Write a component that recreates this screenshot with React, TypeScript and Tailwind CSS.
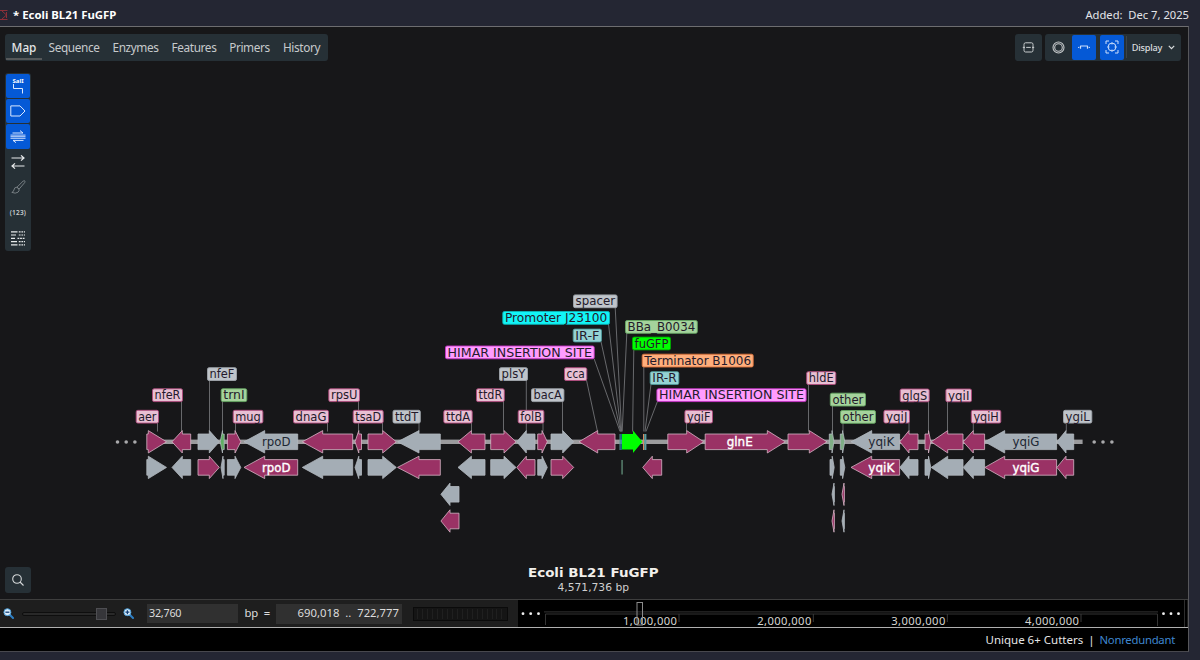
import React from 'react';
import clsx from 'clsx';

const MAROON = '#9a3265';
const GRAY = '#a4adb5';
const GREEN = '#7fae86';

type Gene = {
  tip: number;
  head: number;
  end: number;
  y: number;
  fill: string;
};

const ROWS = [441.8, 467.4, 494.3, 521];

// [tip, head, end, isMaroon] for the genes that appear on both frames
const PAIRED: [number, number, number, boolean][] = [
  [166.5, 148.3, 146.8, true],
  [172, 182.3, 190.7, true],
  [219.3, 209.3, 198, false],
  [240.8, 235, 227.4, true],
  [244, 264.7, 297.7, false],
  [302.3, 322.7, 352.7, true],
  [355, 358.8, 361.5, true],
  [396.3, 382.7, 368, true],
  [397.5, 419, 440.3, false],
  [458, 471.4, 485, true],
  [516, 504, 490.7, true],
  [516.8, 526.3, 535, false],
  [547.3, 542, 537.7, true],
  [573.7, 562.7, 551, false],
  [851, 871.7, 899.6, false],
  [899.8, 909, 918, true],
  [930.8, 928.5, 925, true],
  [931.2, 947.7, 963, true],
  [963.2, 973.3, 984.6, true],
  [984.8, 1004.7, 1056.6, false],
  [1056.9, 1066, 1073.7, false],
];

const genes: Gene[] = [
  ...PAIRED.flatMap(([tip, head, end, maroon]) => [
    { tip, head, end, y: ROWS[0], fill: maroon ? MAROON : GRAY },
    { tip, head, end, y: ROWS[1], fill: maroon ? GRAY : MAROON },
  ]),
  { tip: 220.2, head: 222.5, end: 224.2, y: ROWS[0], fill: '#5fae62' },
  { tip: 221, head: 223, end: 224.2, y: ROWS[1], fill: GRAY },
  { tip: 579, head: 597.7, end: 615, y: ROWS[0], fill: MAROON },
  { tip: 703.7, head: 686.7, end: 667.8, y: ROWS[0], fill: MAROON },
  { tip: 785.3, head: 767.3, end: 705.2, y: ROWS[0], fill: MAROON },
  { tip: 827, head: 809.3, end: 788, y: ROWS[0], fill: MAROON },
  { tip: 642.7, head: 652.3, end: 661.7, y: ROWS[1], fill: MAROON },
  { tip: 834, head: 832, end: 829.3, y: ROWS[0], fill: GREEN },
  { tip: 844.8, head: 842.6, end: 840.3, y: ROWS[0], fill: GREEN },
  { tip: 834.2, head: 832.2, end: 830, y: ROWS[1], fill: GRAY },
  { tip: 844.8, head: 842.6, end: 840.3, y: ROWS[1], fill: GRAY },
  { tip: 832, head: 834, end: 834.4, y: ROWS[2], fill: GRAY },
  { tip: 842, head: 844, end: 844.4, y: ROWS[2], fill: MAROON },
  { tip: 832, head: 834, end: 834.4, y: ROWS[3], fill: MAROON },
  { tip: 842, head: 844, end: 844.4, y: ROWS[3], fill: GRAY },
  { tip: 440.9, head: 450, end: 459, y: ROWS[2], fill: GRAY },
  { tip: 440.9, head: 450, end: 459, y: ROWS[3], fill: MAROON },
];

const geneNames = [
  { text: 'rpoD', x: 262, y: 446, w: 28.5, white: false },
  { text: 'rpoD', x: 262, y: 471.7, w: 28.5, white: true },
  { text: 'glnE', x: 726.7, y: 446, w: 26, white: true },
  { text: 'yqiK', x: 868.3, y: 446, w: 26, white: false },
  { text: 'yqiK', x: 868.3, y: 471.7, w: 26, white: true },
  { text: 'yqiG', x: 1012.5, y: 446, w: 27, white: false },
  { text: 'yqiG', x: 1012.5, y: 471.7, w: 27, white: true },
];

const TONES = {
  pink: ['#e8bfd3', '#b04a7d'],
  gray: ['#bfc4ca', '#9fa5ab'],
  green: ['#a5d39c', '#67a863'],
  lime: ['#00ff00', '#00a800'],
  cyan: ['#12f5f7', '#0bb5b8'],
  teal: ['#94d2d3', '#4f9a9c'],
  magenta: ['#ff9cff', '#c832c8'],
  orange: ['#ffae7c', '#d9703a'],
};

type Tag = {
  text: string;
  x: number;
  right: number;
  y: number;
  tone: keyof typeof TONES;
  line: [number, number];
};

// line: [x where the leader leaves the tag, x where it meets the map]
const tags: Tag[] = [
  { text: 'aer', x: 135.7, right: 159, y: 409.8, tone: 'pink', line: [157.5, 157.5] },
  { text: 'nfeR', x: 152, right: 183, y: 388.3, tone: 'pink', line: [181.5, 181.5] },
  { text: 'nfeF', x: 207, right: 237, y: 367.2, tone: 'gray', line: [209.5, 209.5] },
  { text: 'trnI', x: 220.7, right: 247.3, y: 388.3, tone: 'green', line: [222.5, 222.5] },
  { text: 'mug', x: 232.7, right: 263.4, y: 409.8, tone: 'pink', line: [235.5, 235.5] },
  { text: 'dnaG', x: 293, right: 329, y: 409.8, tone: 'pink', line: [327.5, 327.5] },
  { text: 'rpsU', x: 328.3, right: 360, y: 388.3, tone: 'pink', line: [358.5, 358.5] },
  { text: 'tsaD', x: 352.7, right: 383.7, y: 409.8, tone: 'pink', line: [382.5, 382.5] },
  { text: 'ttdT', x: 392.5, right: 420.8, y: 409.8, tone: 'gray', line: [419, 419] },
  { text: 'ttdA', x: 443.3, right: 472.7, y: 409.8, tone: 'pink', line: [471.5, 471.5] },
  { text: 'ttdR', x: 476, right: 504.8, y: 388.3, tone: 'pink', line: [503.5, 503.5] },
  { text: 'plsY', x: 499, right: 528, y: 367.2, tone: 'gray', line: [526.3, 526.3] },
  { text: 'bacA', x: 531, right: 564.4, y: 388.3, tone: 'gray', line: [562.5, 562.5] },
  { text: 'folB', x: 517.7, right: 544.4, y: 409.8, tone: 'pink', line: [543, 543] },
  { text: 'cca', x: 564, right: 587.3, y: 367.2, tone: 'pink', line: [586.5, 597.5] },
  { text: 'spacer', x: 573, right: 617.6, y: 294.4, tone: 'gray', line: [615.2, 621.6] },
  { text: 'Promoter J23100', x: 502.3, right: 610, y: 311, tone: 'cyan', line: [608.5, 621] },
  { text: 'IR-F', x: 572.7, right: 602, y: 328.6, tone: 'teal', line: [601, 620.6] },
  { text: 'HIMAR INSERTION SITE', x: 445, right: 594.7, y: 345.5, tone: 'magenta', line: [594, 620] },
  { text: 'BBa_B0034', x: 625, right: 697.8, y: 320, tone: 'green', line: [626.8, 622.2] },
  { text: 'fuGFP', x: 632, right: 671, y: 336.6, tone: 'lime', line: [633.8, 632.6] },
  { text: 'Terminator B1006', x: 641.7, right: 753.7, y: 353.7, tone: 'orange', line: [643.8, 643.8] },
  { text: 'IR-R', x: 649.7, right: 679.3, y: 371.2, tone: 'teal', line: [651, 645] },
  { text: 'HIMAR INSERTION SITE', x: 656.4, right: 806.6, y: 388.3, tone: 'magenta', line: [657.5, 646] },
  { text: 'ygiF', x: 684.4, right: 713, y: 409.8, tone: 'pink', line: [686.5, 686.5] },
  { text: 'hldE', x: 806.2, right: 836.3, y: 371.2, tone: 'pink', line: [808.5, 808.5] },
  { text: 'other', x: 829.8, right: 866, y: 392.7, tone: 'green', line: [832.5, 832.5] },
  { text: 'other', x: 840, right: 876, y: 410, tone: 'green', line: [843, 843] },
  { text: 'yqiJ', x: 883.4, right: 910, y: 409.8, tone: 'pink', line: [909, 909] },
  { text: 'glgS', x: 899.7, right: 929.7, y: 388.5, tone: 'pink', line: [928.5, 928.5] },
  { text: 'yqiI', x: 945.4, right: 972, y: 388.5, tone: 'pink', line: [947.5, 947.5] },
  { text: 'yqiH', x: 970.8, right: 1001.3, y: 409.8, tone: 'pink', line: [973.3, 973.3] },
  { text: 'ygiL', x: 1063, right: 1092.3, y: 409.8, tone: 'gray', line: [1066.3, 1066.3] },
];

const GeneArrow = ({ tip, head, end, y, fill }: Gene) => (
  <polygon
    points={`${tip},${y} ${head},${y - 11.2} ${head},${y - 7.8} ${end},${y - 7.8} ${end},${y + 7.8} ${head},${y + 7.8} ${head},${y + 11.2}`}
    fill={fill}
    stroke={fill === MAROON ? '#d5b5c5' : '#b3b9bf'}
    strokeWidth={0.8}
  />
);

const GenomeMap = () => (
  <svg width="1152" height="532" viewBox="36 67 1152 532" className="shrink-0" fontFamily='"DejaVu Sans", sans-serif'>
    {tags.map(({ y, line }, i) => (
      <line key={i} x1={line[0]} y1={y + 13} x2={line[1]} y2={431.5} stroke="#707275" strokeWidth={0.9} />
    ))}
    <rect x="147" y="439.6" width="935.6" height="4.4" fill="#9b9b9d" />
    {[117.5, 126.2, 134.9, 1094.2, 1103, 1111.9].map((cx) => (
      <circle key={cx} cx={cx} cy="442" r="1.8" fill="#a9a9ab" />
    ))}
    {genes.map((gene, i) => (
      <GeneArrow key={i} {...gene} />
    ))}

    <rect x="619.5" y="434" width="1" height="16" fill="#5d8f91" />
    <rect x="620.5" y="434" width="1.2" height="16" fill="#1687a8" />
    <polygon points="622,434 633,434 633,430.6 642.4,441.8 633,453 633,449.6 622,449.6" fill="#00ff00" />
    <rect x="643" y="434" width="1" height="16" fill="#d98a5c" />
    <rect x="644.2" y="434" width="2.2" height="16" fill="#5d9c9e" />
    <rect x="621.5" y="460" width="1.1" height="14.5" fill="#6fa58b" />

    {geneNames.map(({ text, x, y, w, white }, i) => (
      <text
        key={i}
        x={x}
        y={y}
        fontSize="12"
        textLength={w}
        lengthAdjust="spacingAndGlyphs"
        fill={white ? '#ffffff' : '#1d2733'}
        stroke={white ? '#ffffff' : 'none'}
        strokeWidth="0.4"
      >
        {text}
      </text>
    ))}

    {tags.map(({ text, x, right, y, tone }, i) => (
      <g key={i}>
        <rect
          x={x + 0.5}
          y={y + 0.5}
          width={right - x - 1}
          height={12.8}
          rx="1.6"
          fill={TONES[tone][0]}
          stroke={TONES[tone][1]}
          strokeWidth="0.9"
        />
        <text x={x + 2.6} y={y + 11} fontSize="12" textLength={right - x - 5.2} lengthAdjust="spacingAndGlyphs" fill="#241a2b">
          {text}
        </text>
      </g>
    ))}

    <text x="528" y="577" fontSize="13" fontWeight="bold" textLength="130.5" lengthAdjust="spacingAndGlyphs" fill="#f2f0ec">
      Ecoli BL21 FuGFP
    </text>
    <text x="557.5" y="590.6" fontSize="10.7" textLength="71.5" lengthAdjust="spacingAndGlyphs" fill="#cfcfcf">
      4,571,736 bp
    </text>
  </svg>
);

const TABS = [
  { name: 'Map', width: 'w-[36px]' },
  { name: 'Sequence', width: 'w-[64px]' },
  { name: 'Enzymes', width: 'w-[59px]' },
  { name: 'Features', width: 'w-[58px]' },
  { name: 'Primers', width: 'w-[53px]' },
  { name: 'History', width: 'w-[51px]' },
];

const Tabs = () => (
  <nav className="flex h-[27px] w-[323px] items-center rounded-[3px] bg-[#263036] px-px text-[11.8px] tracking-[-0.38px] text-[#c6cacc]">
    {TABS.map(({ name, width }) => (
      <button
        key={name}
        className={clsx(
          'flex shrink-0 items-center justify-center border-b-2 pt-[4px] whitespace-nowrap',
          width,
          name === 'Map'
            ? 'h-[25px] border-[#55585a] font-medium tracking-normal text-[#e4e6e7]'
            : 'h-[25px] border-transparent'
        )}
      >
        {name}
      </button>
    ))}
  </nav>
);

const ViewControls = () => (
  <div className="flex h-[27px] gap-[3px]">
    <button className="flex w-[27px] items-center justify-center rounded-[3px] bg-[#263036]">
      <svg width="13" height="13" viewBox="0 0 13 13" fill="none" stroke="#c9cdcf" strokeWidth="1">
        <path d="M2 4.5V3.5Q2 1.8 3.5 1.8H9.5Q11 1.8 11 3.5V4.5M2 8.5V9.3Q2 11 3.5 11H9.5Q11 11 11 9.3V8.5M.8 6.4H3M10 6.4H12.2M4.2 6.4H8.8M2 4.5V8.5M11 4.5V8.5" />
      </svg>
    </button>
    <div className="flex items-center rounded-[3px] bg-[#263036]">
      <button className="flex w-[27px] items-center justify-center">
        <svg width="13" height="13" viewBox="0 0 13 13" fill="none" stroke="#c3c7c9">
          <circle cx="6.5" cy="6.5" r="5.5" strokeWidth="1.1" />
          <circle cx="6.5" cy="6.5" r="3.8" strokeWidth="1.1" />
        </svg>
      </button>
      <button className="flex h-[25px] w-[24px] items-center justify-center rounded-[2px] bg-[#0559d6]">
        <svg width="14" height="8" viewBox="0 0 14 8" fill="none" stroke="#cfe0fb">
          <path d="M3.2 3H10.8M3.5 3V5.8M10.5 3V5.8" strokeWidth="1.2" />
          <path d="M1 4.4H2.3M11.7 4.4H13" strokeWidth="1" />
        </svg>
      </button>
      <button className="ml-[4px] flex h-[25px] w-[24px] items-center justify-center rounded-[2px] bg-[#0559d6]">
        <svg width="14" height="14" viewBox="0 0 14 14" fill="none" stroke="#cfe0fb">
          <path d="M1 4V1H4M10 1H13V4M13 10V13H10M4 13H1V10" />
          <circle cx="7" cy="7" r="3.9" />
          <path d="M7 2.3V4.5M7 9.5V11.7M2.3 7H4.5M9.5 7H11.7" strokeWidth="0.9" />
        </svg>
      </button>
      <span className="ml-[2px] h-[22px] w-px bg-[#3b4449]" />
      <button className="flex w-[54px] items-center justify-end gap-[5.5px] pt-px pr-[6.5px] text-[9.2px] font-medium tracking-[-0.25px] text-[#dadddf]">
        Display
        <svg width="7" height="5" viewBox="0 0 7 5" fill="none" stroke="#dadddf" strokeWidth="1.2">
          <path d="M.8 .8L3.5 3.6L6.2 .8" />
        </svg>
      </button>
    </div>
  </div>
);

const SideButton = ({ active, children }: { active?: boolean; children: React.ReactNode }) => (
  <button
    className={clsx(
      'flex h-[24.4px] w-[24px] items-center justify-center rounded-[2px]',
      active && 'bg-[#0559d6]'
    )}
  >
    {children}
  </button>
);

const SideBar = () => (
  <aside className="flex w-[36px] shrink-0 flex-col justify-between pt-[5.5px] pb-[6.4px] pl-[5px]">
    <div className="flex w-[26px] flex-col items-center gap-[1px] rounded-[3px] bg-[#263036] py-[1px]">
      <SideButton active>
        <span className="flex flex-col items-center text-[6px] leading-[6px] font-bold text-white">
          SalI
          <svg width="12" height="10" viewBox="0 0 12 10" fill="none" stroke="#dbe8ff" strokeWidth="1">
            <path d="M1.5 0V4.5H10.5V9.5" />
          </svg>
        </span>
      </SideButton>
      <SideButton active>
        <svg width="16" height="12" viewBox="0 0 16 12" fill="none" stroke="#dbe8ff" strokeWidth="1">
          <path d="M.8 .9H10L15 6L10 11H.8Z" />
        </svg>
      </SideButton>
      <SideButton active>
        <svg width="16" height="13" viewBox="0 0 16 13" fill="none" stroke="#dbe8ff" strokeWidth="1">
          <path d="M.5 5.1H15.5M.5 6.7H15.5M.5 8.3H15.5" strokeWidth="0.9" />
          <path d="M2.5 3H13M10 .6L13 3M13.5 10.4H3M6 12.7L3 10.4" />
        </svg>
      </SideButton>
      <SideButton>
        <svg width="14" height="14" viewBox="0 0 14 14" fill="none" stroke="#e8eaeb" strokeWidth="1.2">
          <path d="M.5 3H12.8M10 .4L13 3L10 5.6M13.5 11H1.2M4 8.4L1 11L4 13.6" />
        </svg>
      </SideButton>
      <SideButton>
        <svg width="15" height="14" viewBox="0 0 15 14" fill="none" stroke="#7f878b" strokeWidth="0.9">
          <path d="M6 7.2L12.2 1Q13.5 .3 14 1.2Q14.2 2 13.6 2.7L8 9.2Z" />
          <path d="M5.9 7.2Q3.3 7 2.9 10Q2.5 12 .8 12.4Q4.5 14 7 12.2Q8.6 10.8 8 9.2Z" />
        </svg>
      </SideButton>
      <SideButton>
        <span className="text-[6.5px] font-semibold tracking-[0.2px] text-[#c9cdcf]">(123)</span>
      </SideButton>
      <SideButton>
        <svg width="14" height="15" viewBox="0 0 14 15" fill="none" stroke="#e6e9ea" strokeWidth="1.2">
          <path d="M0 .8H6.5M0 4H5M0 7.3H4M0 10.6H6M0 13.9H6.5" />
          <path d="M7.8 .8H14M7.8 4H14M6.5 7.3H14M7.8 10.6H14M7.8 13.9H14" strokeDasharray="1.8 .8" />
        </svg>
      </SideButton>
    </div>
    <button className="flex h-[26px] w-[26px] items-center justify-center rounded-[3px] bg-[#263036]">
      <svg width="12" height="12" viewBox="0 0 12 12" fill="none" stroke="#d5d8da" strokeWidth="1.1">
        <circle cx="5" cy="5" r="4.3" />
        <path d="M8 8L11.5 11.5" />
      </svg>
    </button>
  </aside>
);

const Magnifier = ({ plus }: { plus?: boolean }) => (
  <svg width="11" height="11" viewBox="0 0 11 11" fill="none" className="shrink-0">
    <path d="M6.5 6.5L10 10" stroke="#2d7fc4" strokeWidth="2" strokeLinecap="round" />
    <circle cx="4.4" cy="4.2" r="3.5" fill="#dceefb" stroke="#4a9ad4" strokeWidth="1" />
    <path d={plus ? 'M2.4 4.2H6.4M4.4 2.2V6.2' : 'M2.4 4.2H6.4'} stroke="#123f78" strokeWidth="1.3" />
  </svg>
);

const RULER_MARKS = [
  { text: '1,000,000', x: 679 },
  { text: '2,000,000', x: 813.3 },
  { text: '3,000,000', x: 947.3 },
  { text: '4,000,000', x: 1081 },
];

const Ruler = () => (
  <svg width="669" height="27" viewBox="518 600 669 27" className="shrink-0 bg-black" fill="none">
    {[523, 530.7, 538.5, 1163.5, 1171, 1178.5].map((cx) => (
      <circle key={cx} cx={cx} cy="613.7" r="1.4" fill="#f0f0f0" />
    ))}
    <path d="M544 611.9H1158" stroke="#333" />
    <path d="M545.5 625V614H1157.5V626" stroke="#343434" />
    {RULER_MARKS.map(({ text, x }) => (
      <g key={text}>
        <path d={`M${x} 614V622`} stroke="#3a3a3a" />
        <text x={x - 56} y="625" fontSize="11.2" textLength="54" fill="#d6d6d2" fontFamily='"Noto Sans", sans-serif'>
          {text}
        </text>
      </g>
    ))}
    <rect x="637" y="602.5" width="5.5" height="22.5" stroke="#8c8c8c" />
    <path d="M1184.5 600V627" stroke="#2e2e2e" />
  </svg>
);

const ZoomBar = () => (
  <div className="flex h-[27px] items-center bg-[#1e1e1e] text-[11.3px] text-[#dcdcdc]">
    <div className="flex w-[147px] items-center pl-[3px]">
      <Magnifier />
      <div className="ml-[8px] flex h-[4px] w-[94px] items-center rounded-full border border-[#0e0e0e] bg-[#292929]">
        <span className="ml-[73px] h-[12px] w-[11px] shrink-0 border border-[#4e4e52] bg-[#36363a]" />
      </div>
      <span className="ml-[7px] flex">
        <Magnifier plus />
      </span>
    </div>
    <div className="flex h-[19px] w-[91px] items-center bg-[#303030] pl-[2px]">
      <span className="text-[10.8px] tracking-[-0.25px]">32,760</span>
    </div>
    <span className="w-[38px] pl-[6.5px] tracking-[-0.15px] whitespace-pre">bp  =</span>
    <div className="flex h-[20px] w-[126px] items-center justify-end bg-[#303030] pr-[3px] whitespace-pre">
      690,018  ..  722,777
    </div>
    <div className="mx-[10.5px] flex h-[14px] w-[95px] items-center justify-evenly border border-[#0b0b0b] bg-[#151515]">
      {Array.from({ length: 18 }, (_, i) => (
        <span key={i} className="h-[10px] w-px bg-[#202020]" />
      ))}
    </div>
    <Ruler />
  </div>
);

const App = () => {
  return (
    <div className="h-[660px] w-[1200px] overflow-hidden bg-[#242633] font-['Noto_Sans','Open_Sans',sans-serif]">
      <header className="flex h-[26px] items-center justify-between pt-[4px] pr-[11px] text-[11.2px] leading-[16px] text-[#e3e4e8]">
        <div className="flex items-center">
          <svg width="9" height="12" viewBox="0 0 9 12" fill="none" stroke="#8c2f38" strokeWidth="1">
            <path d="M0 1.5H7.5M0 10.5H7.5M2 2L6.5 6L2 10M6.5 3V9" />
          </svg>
          <h1 className="ml-[4px] text-[11.4px] font-bold whitespace-pre text-white">* Ecoli BL21 FuGFP</h1>
        </div>
        <span className="whitespace-pre">Added:  Dec 7, 2025</span>
      </header>

      <main className="flex h-[626px] w-[1189px] flex-col border-t border-r border-b border-t-[#6d6d70] border-r-[#57575b] border-b-[#48484e] bg-[#171719]">
        <div className="flex h-[40px] shrink-0 items-center justify-between pr-[7px] pl-[5px]">
          <Tabs />
          <ViewControls />
        </div>
        <div className="flex h-[532px] shrink-0 overflow-hidden">
          <SideBar />
          <GenomeMap />
        </div>
        <div className="shrink-0 border-t border-b border-t-[#3e3e3e] border-b-[#b0b0b0]">
          <ZoomBar />
        </div>
        <footer className="flex flex-1 items-center justify-end gap-[5px] bg-black pt-px pr-[13px] text-[11.5px] text-[#e6e6e6]">
          <span>Unique 6+ Cutters</span>
          <span>|</span>
          <a className="text-[11.3px] tracking-[-0.25px] text-[#3f87d0]">Nonredundant</a>
        </footer>
      </main>
    </div>
  );
};

export default App;
